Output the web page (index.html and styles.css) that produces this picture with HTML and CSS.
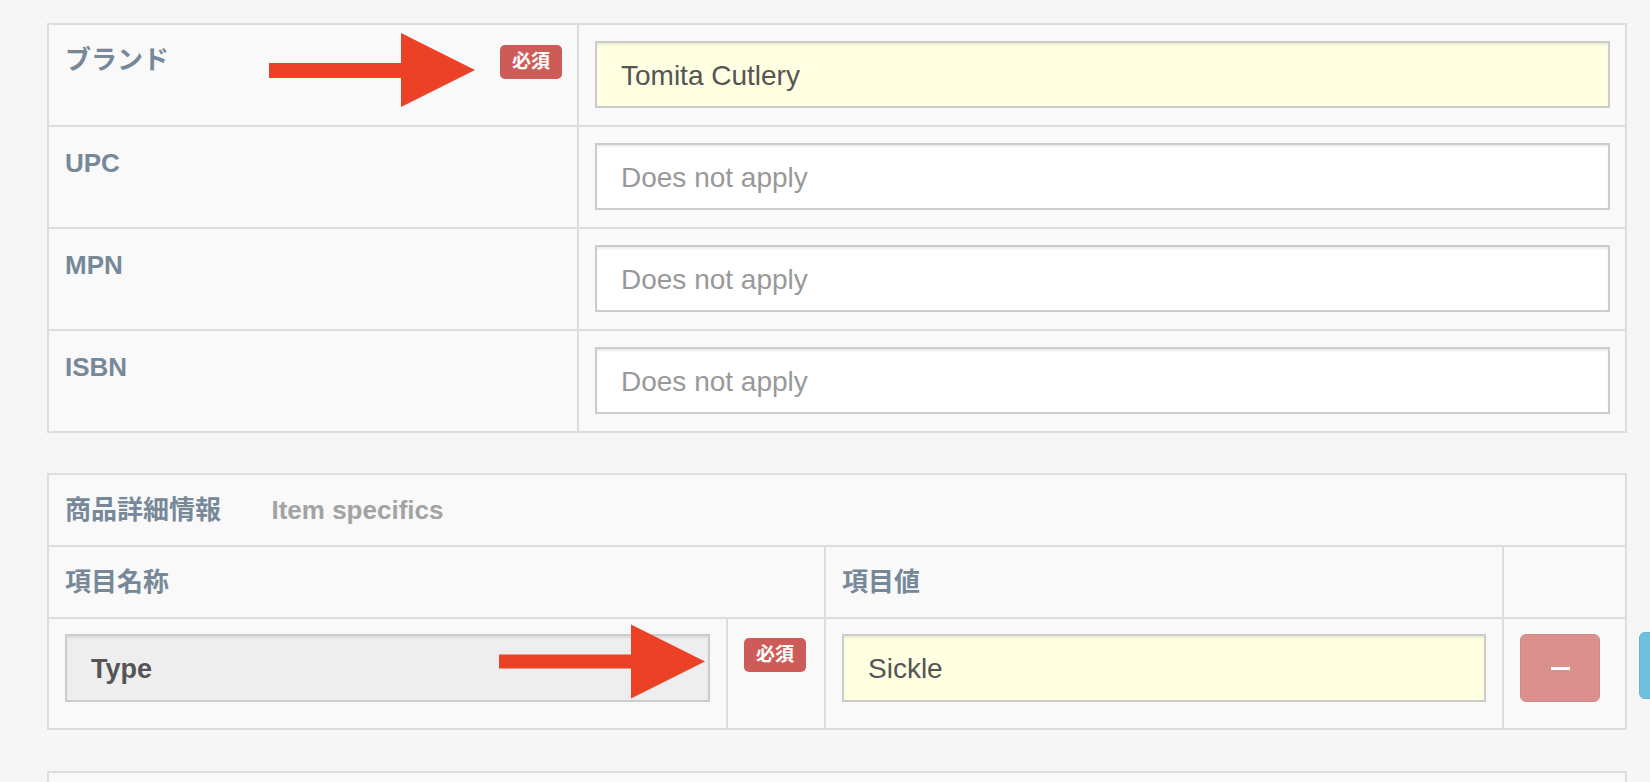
FILE: index.html
```html
<!DOCTYPE html>
<html lang="ja">
<head>
    <meta charset="UTF-8">
    <meta name="viewport" content="width=device-width, initial-scale=1.0">
    <title>商品登録</title>
    <link rel="stylesheet" href="styles.css">
</head>
<body>
    <div class="page">
        <table class="form-table codes">
            <tr>
                <td class="label-cell">
                    <div class="label-line">
                        <span class="label">ブランド</span>
                        <span class="badge">必須</span>
                    </div>
                </td>
                <td class="input-cell"><input type="text" class="field required" value="Tomita Cutlery"></td>
            </tr>
            <tr>
                <td class="label-cell"><span class="label">UPC</span></td>
                <td class="input-cell"><input type="text" class="field" placeholder="Does not apply"></td>
            </tr>
            <tr>
                <td class="label-cell"><span class="label">MPN</span></td>
                <td class="input-cell"><input type="text" class="field" placeholder="Does not apply"></td>
            </tr>
            <tr>
                <td class="label-cell"><span class="label">ISBN</span></td>
                <td class="input-cell"><input type="text" class="field" placeholder="Does not apply"></td>
            </tr>
        </table>

        <table class="form-table specifics">
            <colgroup>
                <col class="col-name">
                <col class="col-badge">
                <col class="col-value">
                <col class="col-action">
            </colgroup>
            <tr>
                <td colspan="4" class="head-cell">
                    <span class="label">商品詳細情報</span>
                    <span class="sub-label">Item specifics</span>
                </td>
            </tr>
            <tr>
                <td colspan="2" class="head-cell"><span class="label">項目名称</span></td>
                <td class="head-cell"><span class="label">項目値</span></td>
                <td class="head-cell"></td>
            </tr>
            <tr class="spec-row">
                <td><input type="text" class="field readonly" value="Type" readonly></td>
                <td><span class="badge">必須</span></td>
                <td><input type="text" class="field required" value="Sickle"></td>
                <td class="action-cell">
                    <div class="actions">
                        <button class="btn btn-remove" disabled><span class="minus"></span></button>
                        <button class="btn btn-add"></button>
                    </div>
                </td>
            </tr>
        </table>

        <div class="next-panel"></div>
    </div>

    <svg class="arrow arrow-brand" viewBox="0 0 206 74" width="206" height="74">
        <polygon points="0,30 132,30 132,0 206,37 132,74 132,45 0,45" fill="#ea4127"/>
    </svg>
    <svg class="arrow arrow-type" viewBox="0 0 206 74" width="206" height="75">
        <polygon points="0,30 132,30 132,0 206,37 132,74 132,44 0,44" fill="#ea4127"/>
    </svg>
</body>
</html>
```

FILE: styles.css
```css
body {
    margin: 0;
    background: #f6f6f6;
    font-family: "Liberation Sans", Arial, "Noto Sans CJK JP", sans-serif;
    color: #555;
}
.page {
    padding: 23px 0 0 47px;
    width: 1580px;
}
.form-table {
    width: 1580px;
    table-layout: fixed;
    border-collapse: separate;
    border-spacing: 0;
    border-top: 2px solid #ddd;
    border-left: 2px solid #ddd;
    background: #f9f9f9;
}
.form-table td {
    box-sizing: border-box;
    border-right: 2px solid #ddd;
    border-bottom: 2px solid #ddd;
    vertical-align: top;
}
.codes td {
    padding: 16px 15px 17px 16px;
}
.codes .label-cell {
    width: 530px;
}
.codes .label-cell > .label {
    display: inline-block;
    margin-top: 2px;
}
.label-line {
    display: flex;
    justify-content: space-between;
    align-items: flex-start;
}
.label-line .label {
    margin-top: 1px;
}
.label {
    font-size: 26px;
    line-height: 36px;
    font-weight: bold;
    color: #778899;
}
.sub-label {
    font-size: 26px;
    line-height: 36px;
    font-weight: bold;
    color: #a3a3a3;
    margin-left: 46px;
}
.badge {
    display: inline-block;
    margin-top: 4px;
    height: 34px;
    padding: 0 12px;
    line-height: 34px;
    font-size: 19px;
    font-weight: bold;
    color: #fff;
    background: #cd5c58;
    border-radius: 5px;
}
.field {
    box-sizing: border-box;
    display: block;
    width: 100%;
    height: 67px;
    margin: 0;
    padding: 2px 24px 0;
    border: 2px solid #ccc;
    border-radius: 0;
    background: #fff;
    box-shadow: inset 0 2px 2px rgba(0, 0, 0, 0.075);
    font-family: "Liberation Sans", Arial, sans-serif;
    font-size: 28px;
    color: #555;
    outline: none;
}
.field::placeholder {
    color: #999;
}
.field.required {
    background: #ffffe2;
}
.field.readonly {
    background: #eee;
    font-weight: bold;
    font-size: 27px;
}
.specifics {
    margin-top: 40px;
}
.col-name { width: 679px; }
.col-badge { width: 98px; }
.col-value { width: 678px; }
.col-action { width: 123px; }
.specifics .head-cell {
    padding: 17px 16px;
    vertical-align: middle;
}
.spec-row td {
    padding: 15px 16px 26px 16px;
}
.spec-row .field {
    height: 68px;
}
.actions {
    display: flex;
    gap: 39px;
    white-space: nowrap;
}
.btn {
    flex: none;
    display: flex;
    align-items: center;
    justify-content: center;
    width: 80px;
    height: 68px;
    padding: 0;
    border: 1px solid transparent;
    border-radius: 6px;
}
.btn-remove {
    background: #da918e;
    border-color: #d48884;
}
.btn-add {
    margin-top: -2px;
    height: 67px;
    background: #6fc0df;
    border-color: #63b6d6;
}
.minus {
    width: 19px;
    height: 3px;
    background: #fff;
}
.next-panel {
    margin-top: 41px;
    height: 60px;
    border: 2px solid #ddd;
    background: #f9f9f9;
}
.arrow {
    position: absolute;
}
.arrow-brand {
    left: 269px;
    top: 33px;
}
.arrow-type {
    left: 499px;
    top: 624px;
}
```
